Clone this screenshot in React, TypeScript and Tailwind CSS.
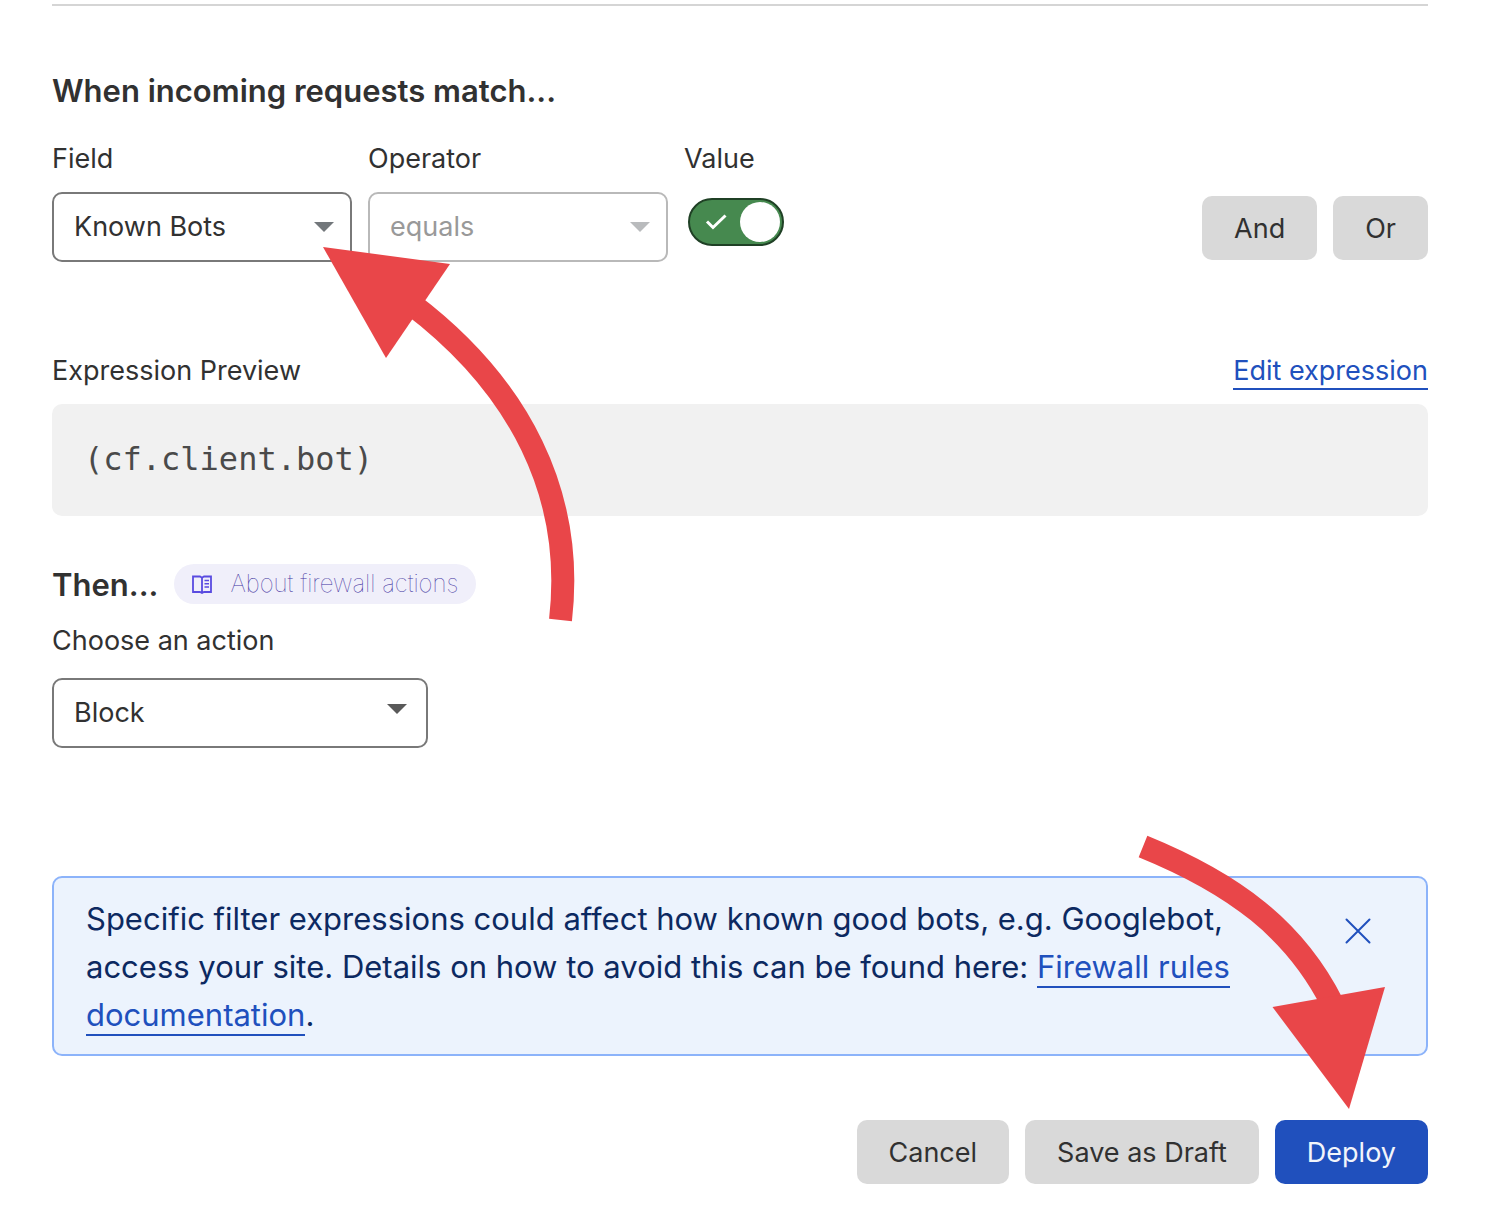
import React, { useState } from "react";
import clsx from "clsx";

interface SelectBoxProps {
	id: string;
	options: string[];
	disabled?: boolean;
	className?: string;
	caretClassName?: string;
}

const SelectBox: React.FC<SelectBoxProps> = ({
	id,
	options,
	disabled,
	className,
	caretClassName,
}) => {
	return (
		<div className={clsx("relative", className)}>
			<select
				id={id}
				disabled={disabled}
				className={clsx(
					"h-[70px] w-full appearance-none rounded-[10px] border-2 bg-white px-5 text-[27px] opacity-100",
					disabled
						? "border-[#b9b9b9] text-[#999999]"
						: "border-[#797979] text-[#313131]",
				)}
			>
				{options.map(option => (
					<option key={option}>{option}</option>
				))}
			</select>
			<svg
				className={clsx(
					"pointer-events-none absolute h-[10px] w-5",
					caretClassName,
				)}
				viewBox="0 0 20 10"
				fill="currentColor"
				aria-hidden="true"
			>
				<path d="M0 0h20L10 10z" />
			</svg>
		</div>
	);
};

interface ButtonProps {
	children: React.ReactNode;
	variant?: "default" | "primary";
}

const Button: React.FC<ButtonProps> = ({ children, variant = "default" }) => {
	return (
		<button
			type="button"
			className={clsx(
				"h-16 rounded-[10px] px-8 pt-[2px] text-[27px] whitespace-nowrap",
				variant === "primary"
					? "bg-[#2050bd] text-[#f2f5fb]"
					: "bg-[#d9d9d9] text-[#313131]",
			)}
		>
			{children}
		</button>
	);
};

const Toggle: React.FC<{ id: string }> = ({ id }) => {
	const [checked, setChecked] = useState<boolean>(true);

	return (
		<div className="relative h-12 w-24">
			<input
				id={id}
				type="checkbox"
				checked={checked}
				onChange={e => setChecked(e.target.checked)}
				className="block h-12 w-24 appearance-none rounded-full border-2 border-[#797979] bg-[#b9b9b9] checked:border-[#1f4025] checked:bg-[#46894f]"
			/>
			<svg
				className="pointer-events-none absolute inset-0"
				viewBox="0 0 96 48"
				fill="none"
				aria-hidden="true"
			>
				{checked && (
					<path
						d="M19 23.500l6 6L37.500 17.500"
						stroke="#fff"
						strokeWidth="3"
					/>
				)}
				<circle cx={checked ? 72 : 24} cy="24" r="20" fill="#fff" />
			</svg>
		</div>
	);
};

const BookIcon: React.FC = () => (
	<svg
		className="h-5 w-5"
		viewBox="0 0 20 20"
		fill="none"
		stroke="#594be0"
		aria-hidden="true"
	>
		<path
			d="M1 2.500h7l2 1.200 2-1.200h7v15.500h-7l-2 1-2-1H1zM10 3.500v15"
			strokeWidth="1.800"
		/>
		<path d="M12.500 6.500H17M12.500 9.800H17M12.500 13H17" strokeWidth="1.600" />
	</svg>
);

const App: React.FC = () => {
	return (
		<main className="relative bg-white pt-1 pr-[76px] pb-8 pl-[52px] font-[Inter,'Liberation_Sans',sans-serif] text-[27px] leading-10 text-[#313131]">
			<hr className="border-t-2 border-[#d5d5d5]" />

			<h2 className="mt-[65px] text-[31px] font-semibold">
				When incoming requests match...
			</h2>

			<div className="mt-7 flex items-end justify-between">
				<div className="flex gap-4">
					<div className="w-[300px]">
						<label htmlFor="field" className="mb-[13px] block">
							Field
						</label>
						<SelectBox
							id="field"
							options={["Known Bots"]}
							caretClassName="top-[30px] right-[18px] text-[#72777b]"
						/>
					</div>
					<div className="w-[300px]">
						<label htmlFor="operator" className="mb-[13px] block">
							Operator
						</label>
						<SelectBox
							id="operator"
							options={["equals"]}
							disabled
							caretClassName="top-[30px] right-[18px] text-[#b9bbbd]"
						/>
					</div>
					<div>
						<label htmlFor="value" className="mb-[19px] block">
							Value
						</label>
						<div className="pl-1">
							<Toggle id="value" />
						</div>
					</div>
				</div>
				<div className="mb-[2px] flex gap-4">
					<Button>And</Button>
					<Button>Or</Button>
				</div>
			</div>

			<div className="mt-[90px] mb-[14px] flex items-end justify-between leading-[38px]">
				<span>Expression Preview</span>
				<a
					href="#edit"
					className="border-b-2 border-[#2050bd] leading-[34px] text-[#2050bd]"
				>
					Edit expression
				</a>
			</div>
			<pre className="rounded-[10px] bg-[#f1f1f1] px-8 pt-[31px] pb-[33px] font-['DejaVu_Sans_Mono',monospace] text-[32px] leading-12 text-[#4a4a4a]">
				(cf.client.bot)
			</pre>

			<div className="mt-12 flex items-center gap-4">
				<h2 className="pt-[2px] text-[31px] leading-[38px] font-semibold">
					Then...
				</h2>
				<a
					href="#actions"
					className="flex h-10 items-center gap-[18px] rounded-full bg-[#f0effa] px-[18px] text-2xl font-thin text-[#3f339f]"
				>
					<BookIcon />
					About firewall actions
				</a>
			</div>
			<label htmlFor="action" className="mt-[17px] mb-[17px] block">
				Choose an action
			</label>
			<SelectBox
				id="action"
				options={["Block"]}
				className="w-[376px]"
				caretClassName="top-[26px] right-[21px] text-[#595959]"
			/>

			<div className="mt-32 flex items-start justify-between rounded-[10px] border-2 border-[#8cb3fa] bg-[#ecf3fd] px-8 pt-[17px] pb-[15px]">
				<p className="max-w-[1180px] text-[31px] leading-12 text-[#0c2961]">
					Specific filter expressions could affect how known good
					bots, e.g. Googlebot, access your site. Details on how to
					avoid this can be found here:{" "}
					<a
						href="#docs"
						className="border-b-2 border-[#2050bd] pb-px text-[#2050bd]"
					>
						Firewall rules documentation
					</a>
					.
				</p>
				<button type="button" aria-label="Close" className="m-[22px]">
					<svg
						className="h-[28px] w-[28px]"
						viewBox="0 0 28 28"
						stroke="#2050bd"
						strokeWidth="2"
						strokeLinecap="round"
						aria-hidden="true"
					>
						<path d="M2.500 2.500l23 23M25.500 2.500l-23 23" />
					</svg>
				</button>
			</div>

			<div className="mt-16 flex justify-end gap-4">
				<Button>Cancel</Button>
				<Button>Save as Draft</Button>
				<Button variant="primary">Deploy</Button>
			</div>

			{/* hand-drawn pointers to the field select and the deploy button */}
			<svg
				className="pointer-events-none absolute top-[240px] left-[320px] h-[390px] w-[260px]"
				viewBox="320 240 260 390"
				fill="none"
				aria-hidden="true"
			>
				<path
					d="M410 303C520 386 575 495 560.500 620"
					stroke="#e94649"
					strokeWidth="23"
				/>
				<path d="M323 247L450 264L386 358z" fill="#e94649" />
			</svg>
			<svg
				className="pointer-events-none absolute top-[830px] right-[114px] h-[290px] w-[260px]"
				viewBox="1130 830 260 290"
				fill="none"
				aria-hidden="true"
			>
				<path
					d="M1143 846.500C1235 884 1295 930 1332 1003"
					stroke="#e94649"
					strokeWidth="23"
				/>
				<path d="M1272.500 1007L1385 987L1349 1109z" fill="#e94649" />
			</svg>
		</main>
	);
};

export default App;
